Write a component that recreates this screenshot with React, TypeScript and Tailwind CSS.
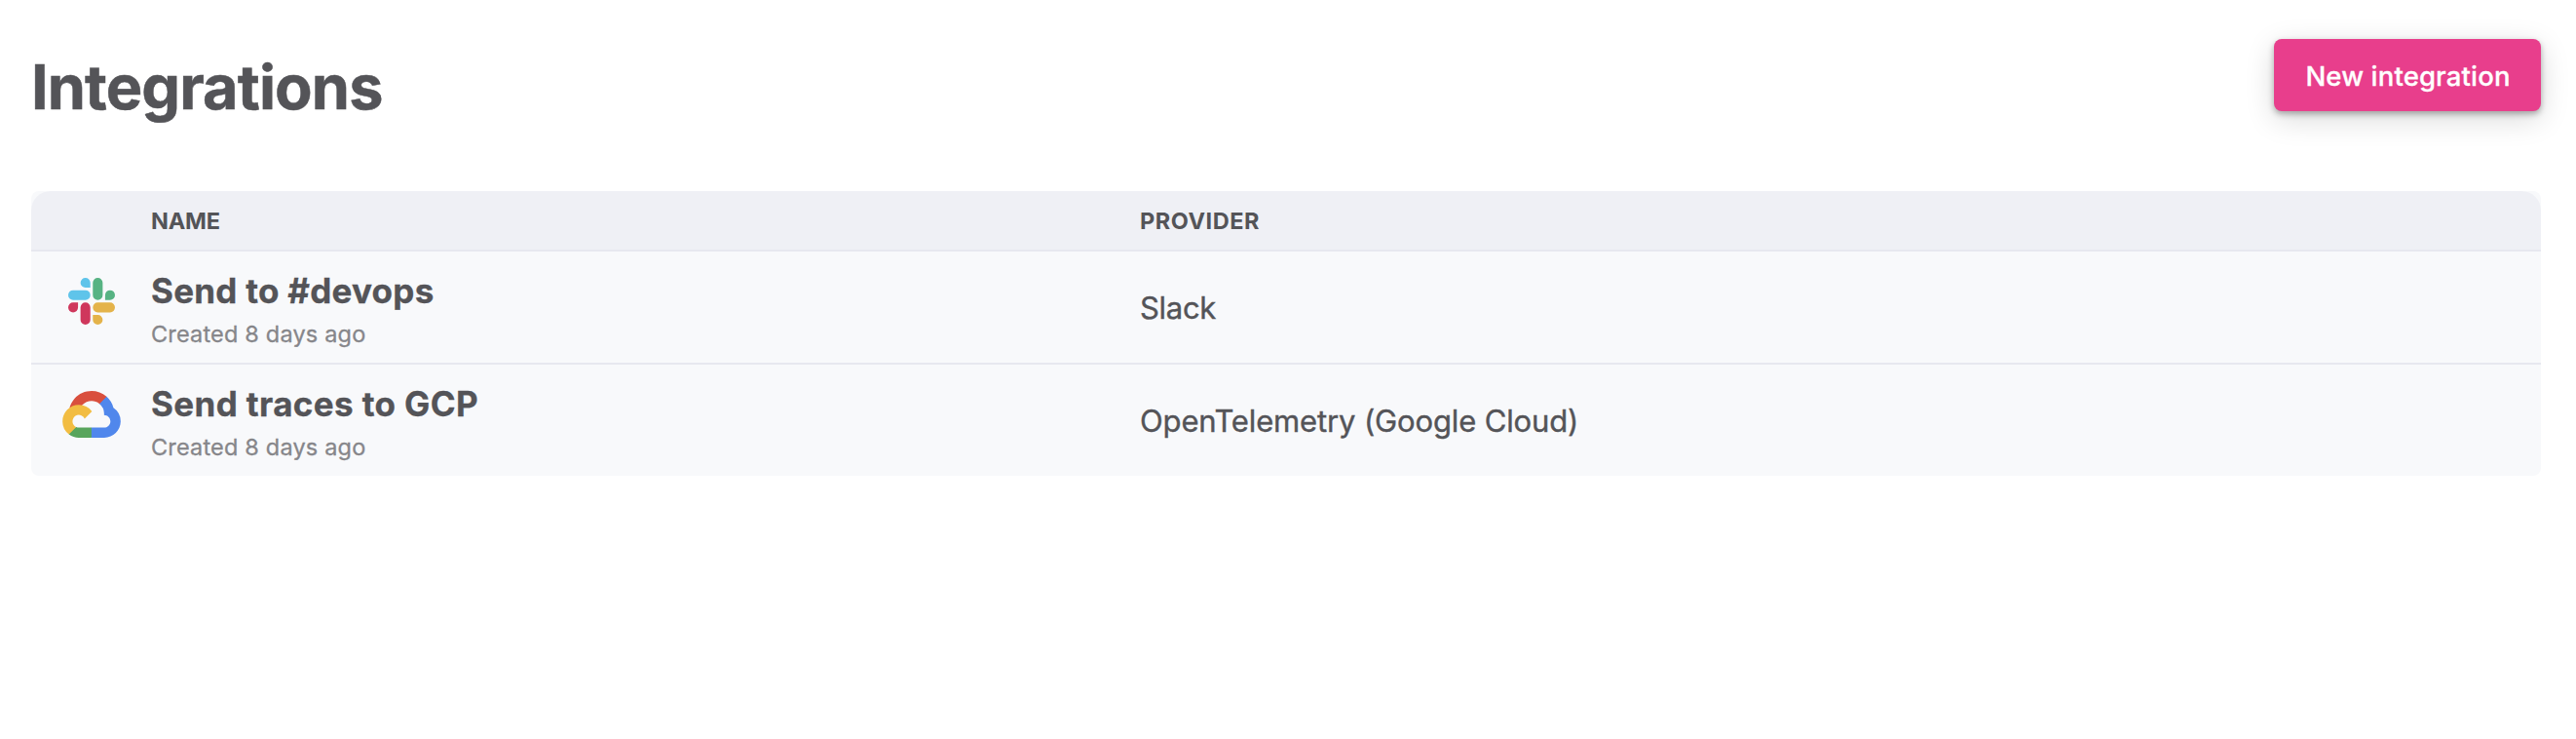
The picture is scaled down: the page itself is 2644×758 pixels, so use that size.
import type { ReactNode } from "react";

function SlackIcon() {
  return (
    <svg viewBox="0 0 24 24" className="h-12 w-12">
      <path
        fill="#cf375c"
        d="M5.042 15.165a2.528 2.528 0 0 1-2.52 2.523A2.528 2.528 0 0 1 0 15.165a2.527 2.527 0 0 1 2.522-2.52h2.52v2.52zM6.313 15.165a2.527 2.527 0 0 1 2.521-2.52 2.527 2.527 0 0 1 2.521 2.52v6.313A2.528 2.528 0 0 1 8.834 24a2.528 2.528 0 0 1-2.521-2.522v-6.313z"
      />
      <path
        fill="#5fc4ea"
        d="M8.834 5.042a2.528 2.528 0 0 1-2.521-2.52A2.528 2.528 0 0 1 8.834 0a2.528 2.528 0 0 1 2.521 2.522v2.52H8.834zM8.834 6.313a2.528 2.528 0 0 1 2.521 2.521 2.528 2.528 0 0 1-2.521 2.521H2.522A2.528 2.528 0 0 1 0 8.834a2.528 2.528 0 0 1 2.522-2.521h6.312z"
      />
      <path
        fill="#57b383"
        d="M18.956 8.834a2.528 2.528 0 0 1 2.522-2.521A2.528 2.528 0 0 1 24 8.834a2.528 2.528 0 0 1-2.522 2.521h-2.522V8.834zM17.688 8.834a2.528 2.528 0 0 1-2.523 2.521 2.527 2.527 0 0 1-2.52-2.521V2.522A2.527 2.527 0 0 1 15.165 0a2.528 2.528 0 0 1 2.523 2.522v6.312z"
      />
      <path
        fill="#e4b34a"
        d="M15.165 18.956a2.528 2.528 0 0 1 2.523 2.522A2.528 2.528 0 0 1 15.165 24a2.527 2.527 0 0 1-2.52-2.522v-2.522h2.52zM15.165 17.688a2.527 2.527 0 0 1-2.52-2.523 2.526 2.526 0 0 1 2.52-2.52h6.313A2.527 2.527 0 0 1 24 15.165a2.528 2.528 0 0 1-2.522 2.523h-6.313z"
      />
    </svg>
  );
}

function GoogleCloudIcon() {
  return (
    <svg viewBox="0 0 256 206" className="h-12 w-[60px]">
      <path
        fill="#d94f3d"
        d="M170.252 56.819l22.253-22.253 1.483-9.37C153.437-11.677 88.976-7.496 52.42 33.92 42.267 45.423 34.734 59.764 30.717 74.573l7.97-1.123 44.505-7.34 3.436-3.513c19.797-21.742 53.27-24.667 76.128-6.168l7.496.39z"
      />
      <path
        fill="#5087ec"
        d="M224.205 73.918a100.249 100.249 0 0 0-30.217-48.722l-31.232 31.232a55.515 55.515 0 0 1 20.379 44.037v5.544c15.35 0 27.797 12.445 27.797 27.796 0 15.352-12.446 27.485-27.797 27.485h-55.671l-5.466 5.934v33.34l5.466 5.231h55.67c39.93.311 72.553-31.494 72.864-71.424a72.303 72.303 0 0 0-31.793-60.453"
      />
      <path
        fill="#58a55c"
        d="M71.87 205.796h55.593V161.29H71.87a27.275 27.275 0 0 1-11.4-2.498l-7.887 2.42-22.409 22.253-1.952 7.574c12.567 9.489 27.9 14.825 43.647 14.757"
      />
      <path
        fill="#f2bd42"
        d="M71.87 61.425C31.94 61.663-.237 94.228.001 134.158a72.301 72.301 0 0 0 28.222 56.88l32.248-32.246c-13.99-6.322-20.208-22.786-13.887-36.776 6.32-13.99 22.786-20.208 36.775-13.888a27.796 27.796 0 0 1 13.887 13.888l32.248-32.248A72.224 72.224 0 0 0 71.87 61.425"
      />
    </svg>
  );
}

type Integration = {
  name: string;
  nameTracking: string;
  created: string;
  provider: string;
  providerTracking: string;
  icon: ReactNode;
};

const integrations: Integration[] = [
  {
    name: "Send to #devops",
    nameTracking: "tracking-[0.26px]",
    created: "Created 8 days ago",
    provider: "Slack",
    providerTracking: "tracking-[-0.3px]",
    icon: <SlackIcon />,
  },
  {
    name: "Send traces to GCP",
    nameTracking: "tracking-[0.38px]",
    created: "Created 8 days ago",
    provider: "OpenTelemetry (Google Cloud)",
    providerTracking: "tracking-[-0.14px]",
    icon: <GoogleCloudIcon />,
  },
];

const columns = "grid grid-cols-[123px_1015px_1fr]";

export default function App() {
  return (
    <main className="min-h-[758px] bg-white px-8 pr-9 font-['Inter',sans-serif] text-[#545458]">
      <header className="flex h-49 items-start justify-between pt-10">
        <h1 className="pt-[13px] text-[63px] leading-[72px] font-bold tracking-[-0.9px] [-webkit-text-stroke:0.5px]">
          Integrations
        </h1>
        <button className="h-[74px] w-[274px] rounded-lg bg-[#e83e8c] pt-[3px] pl-px text-[27.5px] font-medium tracking-[0.15px] text-white shadow-[0_8px_30px_rgba(0,0,0,0.15),0_3px_6px_rgba(0,0,0,0.3)] [-webkit-text-stroke:0.3px]">
          New integration
        </button>
      </header>

      <section className="overflow-hidden rounded-lg bg-[#f8f9fb]">
        <div
          className={`${columns} h-[62px] items-center rounded-t-[20px] border-b-2 border-[#e7e8ef] bg-[#eff0f5] pt-0.5 text-[23.5px] font-bold`}
        >
          <span />
          <span className="tracking-[-0.2px]">NAME</span>
          <span className="tracking-[0.55px]">PROVIDER</span>
        </div>
        {integrations.map((item) => (
          <div
            key={item.name}
            className={`${columns} h-[116px] border-b-2 border-[#e7e8ef] last:h-[114px] last:border-b-0`}
          >
            <div className="flex h-[102px] items-center justify-center">{item.icon}</div>
            <div className="pt-[18px]">
              <div
                className={`text-[35px] leading-[44px] font-bold [-webkit-text-stroke:0.3px] ${item.nameTracking}`}
              >
                {item.name}
              </div>
              <div className="text-[23.5px] leading-[46px] tracking-[0.18px] text-[#86868a] [-webkit-text-stroke:0.3px]">
                {item.created}
              </div>
            </div>
            <div
              className={`flex items-center pt-0.5 text-[31px] [-webkit-text-stroke:0.4px] ${item.providerTracking}`}
            >
              {item.provider}
            </div>
          </div>
        ))}
      </section>
    </main>
  );
}
